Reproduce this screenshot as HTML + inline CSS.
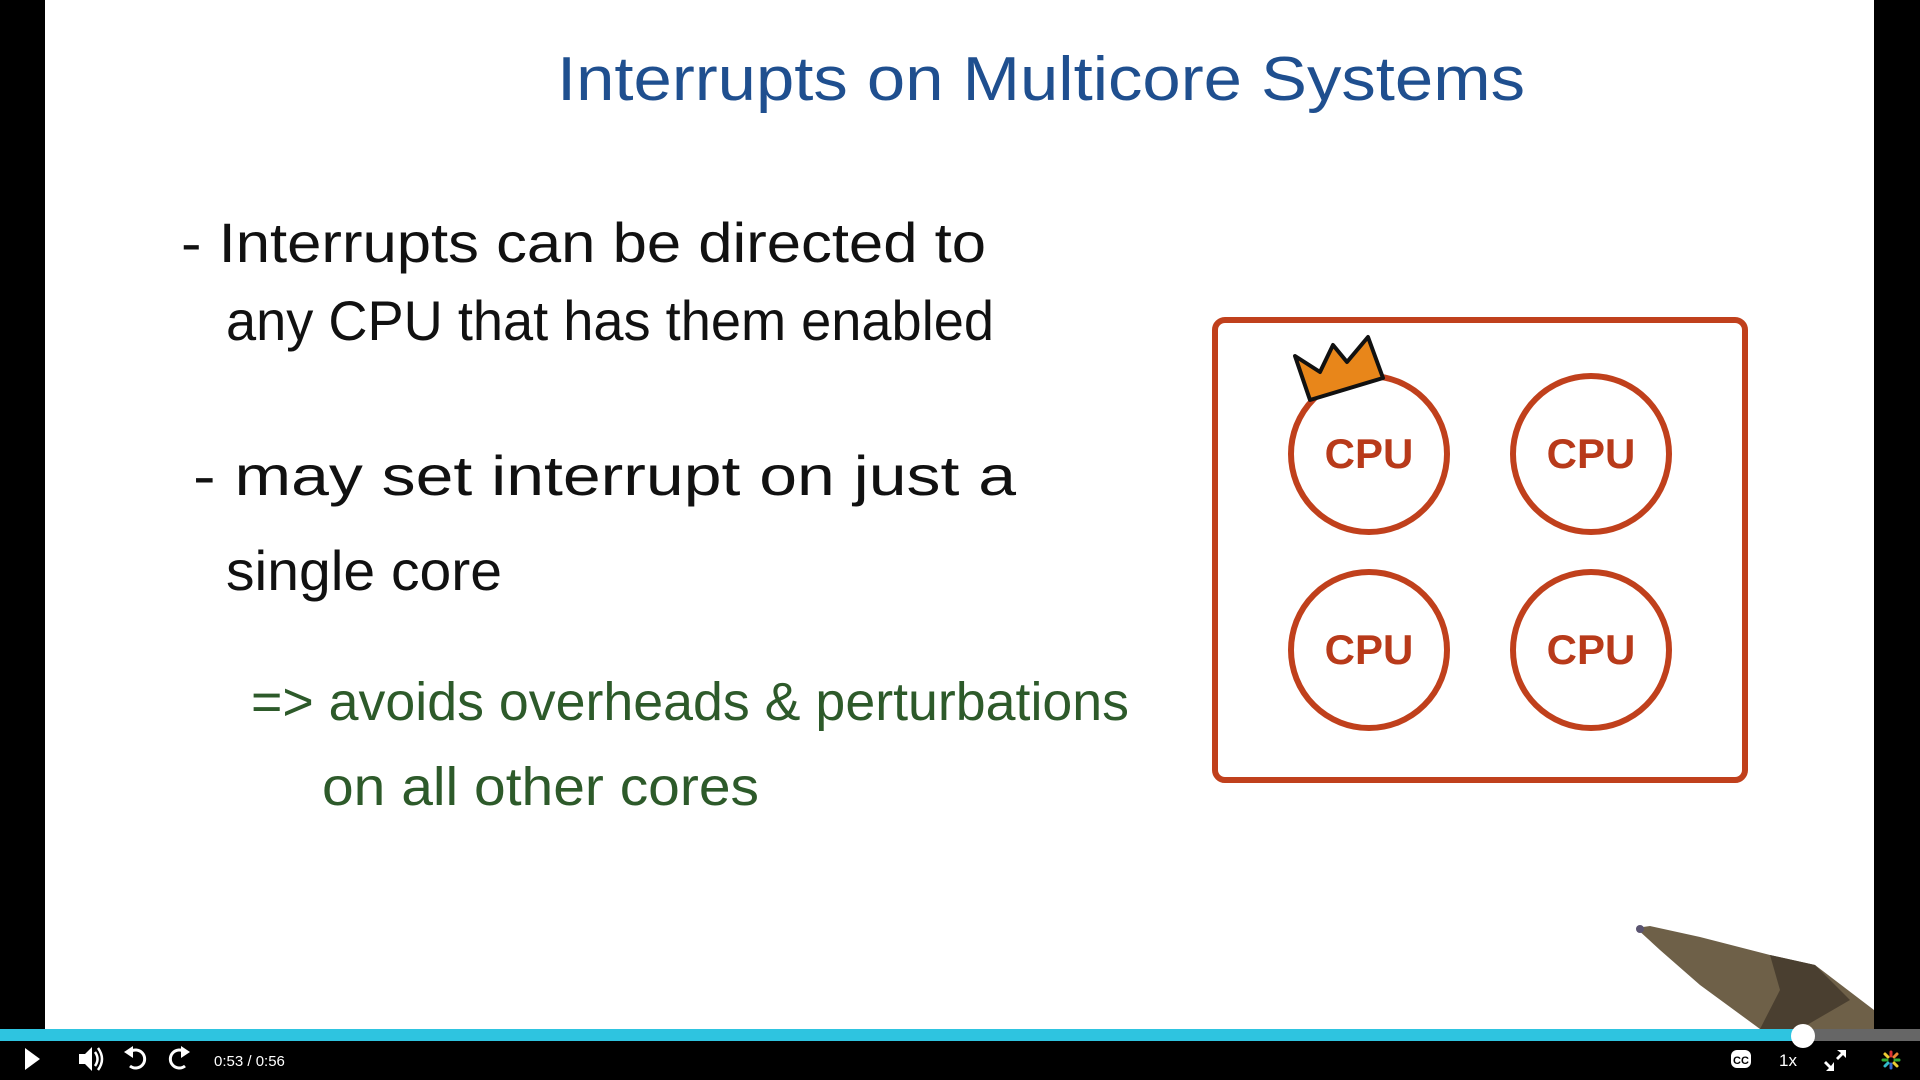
<!DOCTYPE html>
<html><head><meta charset="utf-8"><style>
html,body{margin:0;padding:0;width:1920px;height:1080px;background:#000;overflow:hidden}
svg{display:block}
</style></head><body>
<svg width="1920" height="1080" xmlns="http://www.w3.org/2000/svg">
<rect x="45" y="0" width="1829" height="1029" fill="#fff"/>
<g font-family="Liberation Sans, sans-serif">
<text x="557" y="100" font-size="62" fill="#1f4f8f" textLength="968" lengthAdjust="spacingAndGlyphs">Interrupts  on  Multicore  Systems</text>
<g fill="#111" font-size="56">
<text x="181" y="262" textLength="805" lengthAdjust="spacingAndGlyphs">- Interrupts  can  be  directed  to</text>
<text x="226" y="340" textLength="768" lengthAdjust="spacingAndGlyphs">any  CPU  that  has  them  enabled</text>
<text x="193" y="495" textLength="823" lengthAdjust="spacingAndGlyphs">- may  set  interrupt  on  just  a</text>
<text x="226" y="590" textLength="276" lengthAdjust="spacingAndGlyphs">single  core</text>
</g>
<g fill="#2d5a2a" font-size="54">
<text x="251" y="720" textLength="878" lengthAdjust="spacingAndGlyphs">=&gt;  avoids  overheads  &amp;  perturbations</text>
<text x="322" y="805" textLength="437" lengthAdjust="spacingAndGlyphs">on  all  other  cores</text>
</g>
</g>
<rect x="1215" y="320" width="530" height="460" rx="10" fill="none" stroke="#c0401c" stroke-width="6"/>
<g fill="none" stroke="#c0401c" stroke-width="6">
<circle cx="1369" cy="454" r="78"/><circle cx="1591" cy="454" r="78"/>
<circle cx="1369" cy="650" r="78"/><circle cx="1591" cy="650" r="78"/>
</g>
<g font-family="Liberation Sans, sans-serif" font-weight="bold" font-size="42" fill="#b83a1a" text-anchor="middle">
<text x="1369" y="468">CPU</text><text x="1591" y="468">CPU</text>
<text x="1369" y="664">CPU</text><text x="1591" y="664">CPU</text>
</g>
<polygon points="1295,356 1320,372 1333,345 1347,362 1368,337 1383,378 1310,400" fill="#e8861a" stroke="#111" stroke-width="4" stroke-linejoin="round"/>
<!-- pen -->
<polygon points="1636,928 1650,926 1700,937 1770,955 1815,965 1874,1010 1874,1029 1760,1029 1700,985 1660,950" fill="#6e6048"/>
<polygon points="1770,955 1815,965 1850,1000 1800,1029 1760,1029 1780,990" fill="#4a3f30"/>
<circle cx="1640" cy="929" r="4" fill="#5a5470"/>
<!-- progress -->
<rect x="0" y="1029" width="1920" height="12" fill="#666"/>
<rect x="0" y="1029" width="1803" height="12" fill="#2ec4e0"/>
<circle cx="1803" cy="1036" r="12" fill="#fff"/>
<!-- controls -->
<polygon points="25,1048 25,1070 40,1059" fill="#fff"/>
<polygon points="79,1054 85,1054 92,1047 92,1071 85,1064 79,1064" fill="#fff"/>
<path d="M95 1052 Q100 1059 95 1066 M98 1048 Q106 1059 98 1070" stroke="#fff" stroke-width="2.5" fill="none"/>
<path d="M130 1052 A9 9 0 1 1 130 1066" stroke="#fff" stroke-width="3" fill="none"/>
<polygon points="124,1052 133,1046 133,1058" fill="#fff"/>
<path d="M185 1052 A9 9 0 1 0 185 1066" stroke="#fff" stroke-width="3" fill="none"/>
<polygon points="190,1052 181,1046 181,1058" fill="#fff"/>
<text x="214" y="1066" font-family="Liberation Sans, sans-serif" font-size="15" fill="#fff">0:53  / 0:56</text>
<rect x="1731" y="1050" width="20" height="18" rx="6" fill="#fff"/>
<text x="1741" y="1064" font-family="Liberation Sans, sans-serif" font-weight="bold" font-size="11" fill="#000" text-anchor="middle">CC</text>
<text x="1779" y="1066" font-family="Liberation Sans, sans-serif" font-size="17" fill="#fff">1x</text>
<path d="M1829 1052 L1839 1052 M1836 1050 L1836 1062 M1838 1048 L1846 1056 M1838 1062 L1827 1062 M1826 1063 L1826 1073" stroke="#fff" stroke-width="0" fill="none"/>
<polygon points="1837,1050 1846,1050 1846,1058 1843,1055 1838,1060 1836,1058 1841,1053" fill="#fff" transform="rotate(0)"/>
<polygon points="1834,1062 1834,1071 1826,1071 1829,1068 1824,1063 1826,1061 1831,1066" fill="#fff"/>
<g stroke-width="3" stroke-linecap="round">
<line x1="1891" y1="1052" x2="1891" y2="1056" stroke="#d33"/>
<line x1="1891" y1="1064" x2="1891" y2="1068" stroke="#36c"/>
<line x1="1883" y1="1060" x2="1887" y2="1060" stroke="#3a3"/>
<line x1="1895" y1="1060" x2="1899" y2="1060" stroke="#3a3"/>
<line x1="1885" y1="1054" x2="1888" y2="1057" stroke="#ec3"/>
<line x1="1897" y1="1066" x2="1894" y2="1063" stroke="#ec3"/>
<line x1="1897" y1="1054" x2="1894" y2="1057" stroke="#e83"/>
<line x1="1885" y1="1066" x2="1888" y2="1063" stroke="#3bc"/>
</g>
</svg>
</body></html>
